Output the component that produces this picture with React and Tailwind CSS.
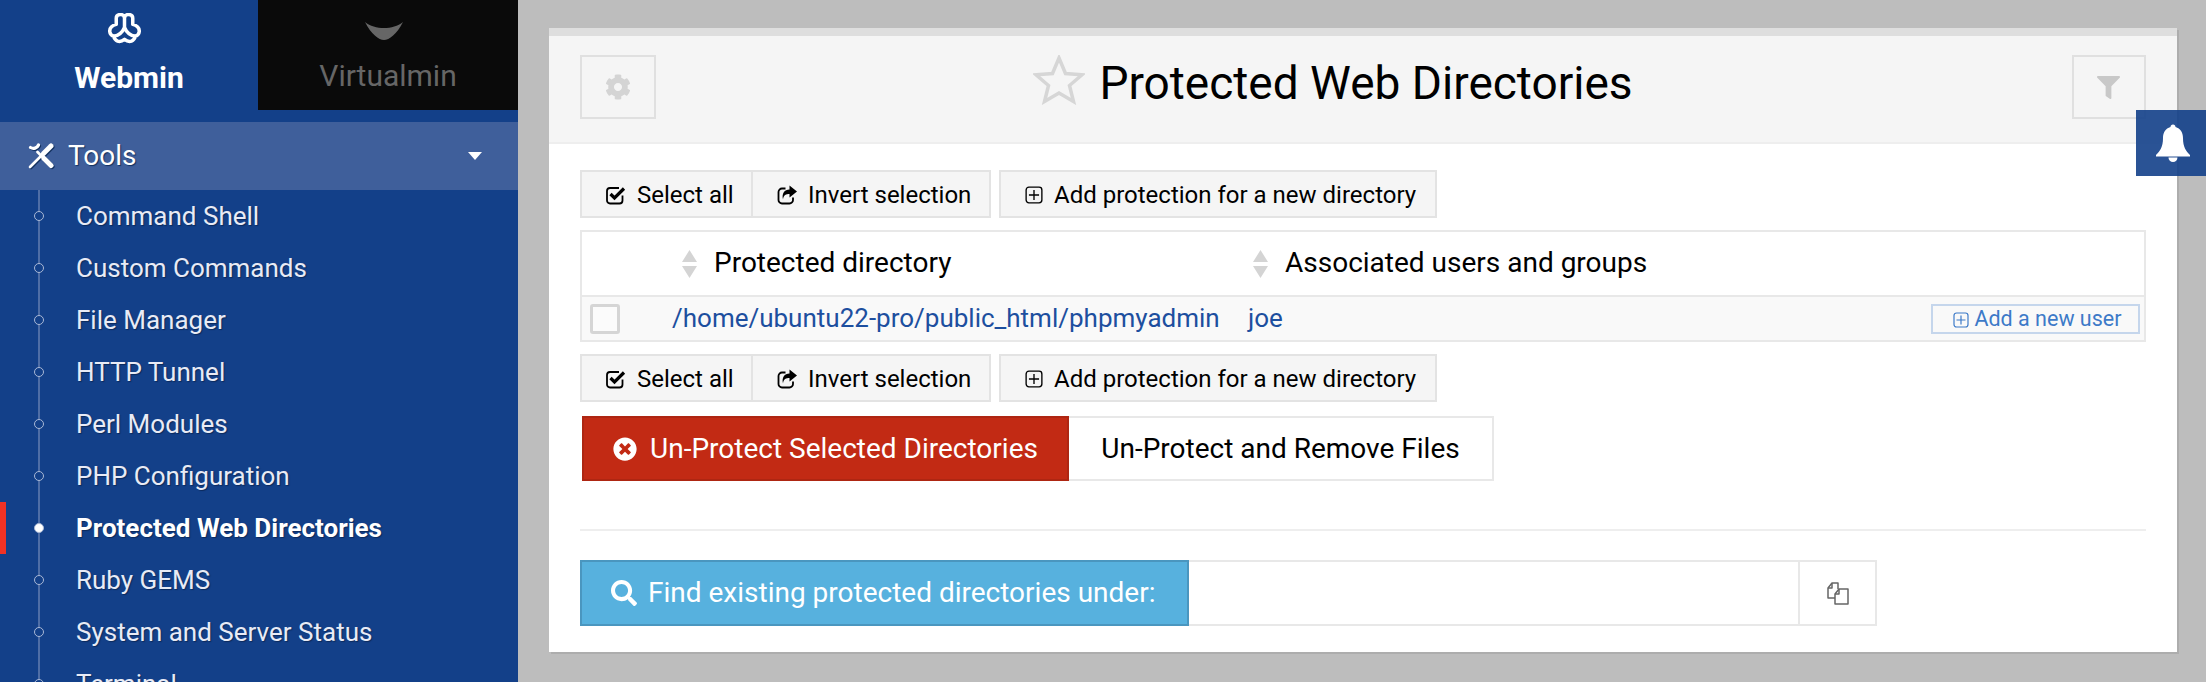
import React from "react";
import { FaCog, FaFilter, FaSearch, FaTimesCircle } from "react-icons/fa";

const font = { fontFamily: "Roboto, sans-serif" };

const menu = [
  "Command Shell",
  "Custom Commands",
  "File Manager",
  "HTTP Tunnel",
  "Perl Modules",
  "PHP Configuration",
  "Protected Web Directories",
  "Ruby GEMS",
  "System and Server Status",
  "Terminal",
];

const WebminLogo = () => (
  <svg width="33" height="31" viewBox="0 0 32 30" fill="none" stroke="white" strokeWidth="3.400" strokeLinejoin="round" className="mr-[10px]">
    <path d="M16 4C15 .5 8 .5 8 5V11C4 12 1.500 14.500 1.700 18C2 21 4 22 5.500 22.500C6.500 27 11 29.500 16 25.500C21 29.500 25.500 27 26.500 22.500C28 22 30 21 30.300 18C30.500 14.500 28 12 24 11V5C24 .5 17 .5 16 4Z" />
    <path d="M16 4V14C14 19 10 22 5.500 22.500M16 14C18 19 22 22 26.500 22.500" />
  </svg>
);

const VirtualminLogo = () => (
  <svg width="38" height="18" viewBox="0 0 38 18" fill="#666" className="mr-2">
    <path d="M0 0C10 8 28 8 38 0C32 12 24 18 19 18C14 18 6 12 0 0Z" />
  </svg>
);

const ToolsIcon = () => (
  <svg width="26" height="26" viewBox="0 0 26 26" fill="none" stroke="white" strokeLinecap="round" className="[filter:drop-shadow(1px_1px_0_#12305f)]">
    <path d="M23 3L15.500 10.500" strokeWidth="5" />
    <path d="M15.500 10.500L2 24" strokeWidth="2.600" />
    <path d="M2.500 4.500A5.500 5.500 0 0 0 10.500 2" strokeWidth="3.200" />
    <path d="M9.500 9L15.500 15" strokeWidth="2.800" />
    <path d="M16 15.500L23 22.500" strokeWidth="5" />
  </svg>
);

const BellIcon = () => (
  <svg width="36" height="38" viewBox="0 0 36 38" fill="white" className="mr-0.5">
    <path d="M18 .5C16.500 .5 15.500 1.500 15.500 3C10.500 4.500 8 8.500 8 14C8 23 5 27 1 31V32.500H35V31C31 27 28 23 28 14C28 8.500 25.500 4.500 20.500 3C20.500 1.500 19.500 .5 18 .5Z" />
    <path d="M13.500 33.500A4.500 4.500 0 0 0 22.500 33.500Z" />
  </svg>
);

const PlusSquare = ({ size = 16, className = "" }) => (
  <svg width={size} height={size} viewBox="0 0 16 16" fill="none" stroke="currentColor" strokeWidth="1.2" className={className}>
    <rect x="1" y="1" width="14" height="14" rx="2.500" />
    <path d="M8 3.500V12.500M3.500 8H12.500" />
  </svg>
);

const CheckSquare = () => (
  <svg width="20" height="20" viewBox="0 0 20 20" fill="none" stroke="black">
    <path d="M16.500 10.500V15.500A3 3 0 0 1 13.500 18.500H4A3 3 0 0 1 1 15.500V6A3 3 0 0 1 4 3H13" strokeWidth="1.800" />
    <path d="M4.500 9L8.500 13L18 3.500" strokeWidth="3.200" />
  </svg>
);

const InvertIcon = () => (
  <svg width="20" height="20" viewBox="0 0 20 20" fill="none">
    <path d="M8.500 3.500H5A3.500 3.500 0 0 0 1.500 7V15A3.500 3.500 0 0 0 5 18.500H12.500A3.500 3.500 0 0 0 16 15V12.500" stroke="black" strokeWidth="1.800" />
    <path d="M12.500 .5L20 6.500L12.500 12.500V9C9 9 6.500 10 6 14.500C4.500 8.500 7.500 4.500 12.500 4.500Z" fill="black" />
  </svg>
);

const SortArrows = () => (
  <svg width="15" height="28" viewBox="0 0 15 28" fill="#d4d4d4">
    <path d="M7.500 0L15 12H0Z" />
    <path d="M0 16H15L7.500 28Z" />
  </svg>
);

const FilesIcon = () => (
  <svg width="22" height="23" viewBox="0 0 22 23" fill="none" stroke="#666" strokeWidth="1.500" strokeLinejoin="round">
    <path d="M8 16H1V6L5 1H11V7" />
    <path d="M5 1V6H1" />
    <path d="M8 22V12L12 7H21V22Z" fill="white" />
    <path d="M12 7V12H8" />
  </svg>
);

const ToolButton = ({ icon, label, className = "" }) => (
  <button className={`flex h-full items-center gap-[11px] whitespace-nowrap border-2 border-[#e3e3e3] bg-[#f5f5f5] pt-px text-[24px] text-black ${className}`}>
    {icon}
    {label}
  </button>
);

const Toolbar = () => (
  <div className="flex h-12 gap-2">
    <div className="flex h-full">
      <ToolButton className="w-[173px] pl-6" icon={<CheckSquare />} label="Select all" />
      <ToolButton className="-ml-0.5 w-[240px] pl-6" icon={<InvertIcon />} label="Invert selection" />
    </div>
    <ToolButton className="w-[438px] pl-6" icon={<PlusSquare size={18} />} label="Add protection for a new directory" />
  </div>
);

const Sidebar = () => (
  <aside className="w-[518px] shrink-0 overflow-hidden bg-[#134089]">
    <div className="flex h-[110px]">
      <div className="flex w-[258px] flex-col items-center pt-[13px]">
        <WebminLogo />
        <div className="mt-[18px] text-[30px] font-bold leading-8 text-white">Webmin</div>
      </div>
      <div className="flex w-[260px] flex-col items-center bg-[#0a0a0a] pt-[22px]">
        <VirtualminLogo />
        <div className="mt-[20px] text-[30px] leading-8 text-[#666]">Virtualmin</div>
      </div>
    </div>
    <div className="mt-3 flex h-[68px] items-center bg-[#3f5f9b] pl-7 pr-9 text-white">
      <ToolsIcon />
      <span className="ml-[14px] text-[28px] [text-shadow:1px_1px_1px_#12305f]">Tools</span>
      <span className="ml-auto h-0 w-0 border-x-[7px] border-t-[8px] border-x-transparent border-t-white" />
    </div>
    <ul className="ml-[38px] border-l-2 border-[#4f6ea6]">
      {menu.map((item) => {
        const active = item === "Protected Web Directories";
        return (
          <li key={item} className="relative -ml-[6px] flex h-[52px] items-center">
            {active && <span className="absolute -left-[34px] top-0 h-full w-1.5 bg-[#f03225]" />}
            <span className={`size-[10px] shrink-0 rounded-full border border-[#a9b8d6] ${active ? "bg-white" : "bg-[#134089]"}`} />
            <span className={`ml-[32px] text-[26px] [text-shadow:1px_1px_1px_#0c2a5c] ${active ? "font-bold text-white" : "text-[#e8ebf6]"}`}>
              {item}
            </span>
          </li>
        );
      })}
    </ul>
  </aside>
);

const Table = () => (
  <div className="mt-3 border-2 border-[#e8e8e8]">
    <div className="flex h-[65px] items-center border-b-2 border-[#e8e8e8] text-[28px] text-black">
      <div className="ml-[100px] flex w-[571px] items-center gap-[17px]">
        <SortArrows />
        <span className="-mt-0.5">Protected directory</span>
      </div>
      <div className="flex items-center gap-[17px]">
        <SortArrows />
        <span className="-mt-0.5">Associated users and groups</span>
      </div>
    </div>
    <div className="flex h-[43px] items-center bg-[#f9f9f9] text-[26px] text-[#1d4f9f]">
      <span className="ml-2 size-[30px] shrink-0 rounded-[3px] border-[3px] border-[#d5d5d5] bg-[#fbfbfb]" />
      <span className="ml-[52px] w-[576px] whitespace-nowrap">/home/ubuntu22-pro/public_html/phpmyadmin</span>
      <span>joe</span>
      <button className="ml-auto mr-1 flex h-[30px] w-[209px] items-center justify-center gap-[5px] border-2 border-[#c5d6ec] pl-1 pt-0.5 text-[21.5px] text-[#3d7ac8]">
        <PlusSquare size={16} />
        Add a new user
      </button>
    </div>
  </div>
);

const Card = () => (
  <section className="flex h-[624px] flex-col border-t-8 border-[#dedede] bg-white shadow-[2px_2px_0_#adadad]">
    <header className="flex h-[108px] items-start justify-between border-b-2 border-[#eeeeee] bg-[#f5f5f5] px-[31px] pt-[19px]">
      <button className="flex h-[64px] w-[76px] items-center justify-center border-2 border-[#e0e0e0] text-[#d4d4d4]">
        <FaCog className="size-[26px]" />
      </button>
      <h1 className="mr-[62px] flex items-start gap-[14px] text-[46px] font-normal leading-[50px] text-black">
        <svg width="52" height="50" viewBox="0 0 52 50" fill="none" stroke="#d6d6d6" strokeWidth="3.500">
          <path d="M26 3L32.500 18.500L49 19.700L36.500 30.500L40.500 46.500L26 38L11.500 46.500L15.500 30.500L3 19.700L19.500 18.500Z" />
        </svg>
        <span className="mt-[3px]">Protected Web Directories</span>
      </h1>
      <button className="flex h-[64px] w-[74px] items-center justify-center border-2 border-[#e0e0e0] text-[#c8c8c8]">
        <FaFilter className="size-[23px]" />
      </button>
    </header>
    <div className="flex flex-1 flex-col px-[31px] pt-[26px]">
      <Toolbar />
      <Table />
      <div className="mt-3">
        <Toolbar />
      </div>
      <div className="ml-0.5 mt-[14px] flex h-[65px] text-[28px]">
        <button className="flex w-[487px] items-center justify-center gap-[13px] border-2 border-[#ae2612] bg-[#c22a14] text-white">
          <FaTimesCircle className="size-6" />
          Un-Protect Selected Directories
        </button>
        <button className="w-[425px] border-2 border-l-0 border-[#e8e8e8] bg-white text-black">
          Un-Protect and Remove Files
        </button>
      </div>
      <hr className="mt-12 border-t-2 border-[#eeeeee]" />
      <div className="mt-[29px] flex h-[66px] w-[1297px] text-[28px]">
        <div className="flex w-[609px] items-center gap-[11px] whitespace-nowrap border-2 border-[#4a96bf] bg-[#57b1de] pl-[29px] text-white">
          <FaSearch className="size-[26px]" />
          Find existing protected directories under:
        </div>
        <div className="flex-1 border-y-2 border-[#e8e8e8] bg-white" />
        <div className="flex w-[79px] items-center justify-center border-2 border-[#e8e8e8]">
          <FilesIcon />
        </div>
      </div>
    </div>
  </section>
);

export default function App() {
  return (
    <div className="relative flex h-[682px] w-[2206px] overflow-hidden bg-[#bdbdbd]" style={font}>
      <Sidebar />
      <main className="flex-1 pl-[31px] pr-[29px] pt-7">
        <Card />
      </main>
      <div className="absolute left-[2136px] top-[110px] flex h-[66px] w-[70px] items-center justify-center bg-[#134089]/90 pl-[6px]">
        <BellIcon />
      </div>
    </div>
  );
}
